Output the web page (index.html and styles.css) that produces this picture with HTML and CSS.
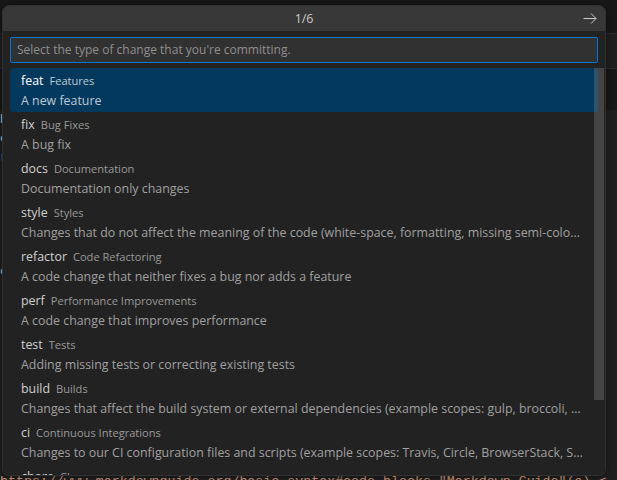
FILE: index.html
```html
<!DOCTYPE html>
<html>
<head>
<meta charset="utf-8">
<link rel="stylesheet" href="styles.css">
</head>
<body>
<div class="editor">
  <div class="topbar"></div>
  <div class="tabs"></div>
  <div class="crumbs"></div>
  <div class="code">
    <div class="ln">He</div>
    <div class="ln">er</div>
    <div class="ln">ra</div>
    <div class="ln"></div>
    <div class="ln"></div>
    <div class="ln"></div>
    <div class="ln"></div>
    <div class="ln"></div>
    <div class="ln">co</div>
    <div class="ln"></div>
    <div class="ln"></div>
    <div class="ln"></div>
    <div class="ln"></div>
    <div class="ln"></div>
    <div class="ln"></div>
    <div class="ln"></div>
    <div class="ln"></div>
    <div class="ln"></div>
    <div class="ln url">https://www.markdownguide.org/basic-syntax#code-blocks "Markdown Guide"(a) &lt;</div>
  </div>
</div>

<div class="quick-input">
  <div class="qi-title">
    <span>1/6</span>
    <svg class="qi-arrow" width="16" height="16" viewBox="0 0 16 16"><path d="M1.5 8.5h12.5M9 3.5l5 5-5 5" fill="none" stroke="#cccccc" stroke-width="1"/></svg>
  </div>
  <div class="qi-header">
    <div class="qi-input">Select the type of change that you're committing.</div>
  </div>
  <div class="qi-list">
    <div class="row selected">
      <div class="label"><span class="name">feat</span><span class="desc">Features</span></div>
      <div class="detail">A new feature</div>
    </div>
    <div class="row">
      <div class="label"><span class="name">fix</span><span class="desc">Bug Fixes</span></div>
      <div class="detail">A bug fix</div>
    </div>
    <div class="row">
      <div class="label"><span class="name">docs</span><span class="desc">Documentation</span></div>
      <div class="detail">Documentation only changes</div>
    </div>
    <div class="row">
      <div class="label"><span class="name">style</span><span class="desc">Styles</span></div>
      <div class="detail">Changes that do not affect the meaning of the code (white-space, formatting, missing semi-colons, etc)</div>
    </div>
    <div class="row">
      <div class="label"><span class="name">refactor</span><span class="desc">Code Refactoring</span></div>
      <div class="detail">A code change that neither fixes a bug nor adds a feature</div>
    </div>
    <div class="row">
      <div class="label"><span class="name">perf</span><span class="desc">Performance Improvements</span></div>
      <div class="detail">A code change that improves performance</div>
    </div>
    <div class="row">
      <div class="label"><span class="name">test</span><span class="desc">Tests</span></div>
      <div class="detail">Adding missing tests or correcting existing tests</div>
    </div>
    <div class="row">
      <div class="label"><span class="name">build</span><span class="desc">Builds</span></div>
      <div class="detail">Changes that affect the build system or external dependencies (example scopes: gulp, broccoli, npm)</div>
    </div>
    <div class="row">
      <div class="label"><span class="name">ci</span><span class="desc">Continuous Integrations</span></div>
      <div class="detail">Changes to our CI configuration files and scripts (example scopes: Travis, Circle, BrowserStack, SauceLabs)</div>
    </div>
    <div class="row">
      <div class="label"><span class="name">chore</span><span class="desc">Chores</span></div>
      <div class="detail">Other changes that don't modify src or test files</div>
    </div>
  </div>
  <div class="qi-scroll"></div>
</div>
</body>
</html>
```

FILE: styles.css
```css
html, body {
  margin: 0;
  padding: 0;
}
body {
  width: 617px;
  height: 480px;
  overflow: hidden;
  background: #1f1f1f;
  position: relative;
  font-family: "Open Sans", "Noto Sans", sans-serif;
}
.editor {
  display: flex;
  flex-direction: column;
}
.topbar {
  height: 33px;
  background: #181818;
  border-bottom: 1px solid #2b2b2b;
}
.tabs {
  height: 34px;
  background: #1f1f1f;
  border-bottom: 1px solid #2b2b2b;
}
.crumbs {
  height: 41px;
  background: #181818;
}
.code {
  font-family: "Liberation Mono", monospace;
  font-size: 13.3px;
  line-height: 19px;
  color: #cccccc;
}
.ln {
  height: 19px;
  white-space: pre;
}
.url {
  color: #ce9178;
  margin-top: 20px;
}
.quick-input {
  position: absolute;
  left: 3px;
  top: 6px;
  width: 602px;
  height: 469px;
  background: #222222;
  border-radius: 6px;
  box-shadow: 0 0 8px rgba(0, 0, 0, 0.6);
  outline: 1px solid #313131;
  overflow: hidden;
  display: flex;
  flex-direction: column;
}
.qi-title {
  height: 25px;
  flex: none;
  background: #383838;
  color: #cccccc;
  font-size: 12.4px;
  display: flex;
  align-items: center;
  justify-content: center;
  position: relative;
}
.qi-arrow {
  position: absolute;
  right: 7px;
  top: 4px;
}
.qi-header {
  padding: 6px 7px 5px;
  flex: none;
}
.qi-input {
  height: 24px;
  border: 1px solid #0078d4;
  background: #313131;
  color: #8f8f8f;
  font-size: 12px;
  line-height: 24px;
  padding: 0 6px;
  border-radius: 2px;
  white-space: nowrap;
  overflow: hidden;
}
.qi-list {
  padding: 0 7px;
  display: flex;
  flex-direction: column;
}
.row {
  height: 44px;
  flex: none;
  padding: 0 14px 0 11px;
  border-radius: 3px;
  display: flex;
  flex-direction: column;
}
.row.selected {
  background: #04395e;
}
.label {
  height: 22px;
  line-height: 22px;
  white-space: nowrap;
  overflow: hidden;
}
.name {
  font-size: 12.4px;
  color: #d0d0d0;
}
.desc {
  font-size: 11.1px;
  color: #9a9a9a;
  margin-left: 6px;
}
.detail {
  height: 22px;
  line-height: 22px;
  font-size: 12.4px;
  color: #a0a0a0;
  white-space: nowrap;
  overflow: hidden;
  text-overflow: ellipsis;
}
.selected .name {
  color: #ffffff;
}
.selected .desc,
.selected .detail {
  color: #bcc8d3;
}
.qi-scroll {
  position: absolute;
  right: 1px;
  top: 62px;
  width: 10px;
  height: 332px;
  background: rgba(121, 121, 121, 0.4);
}
```
